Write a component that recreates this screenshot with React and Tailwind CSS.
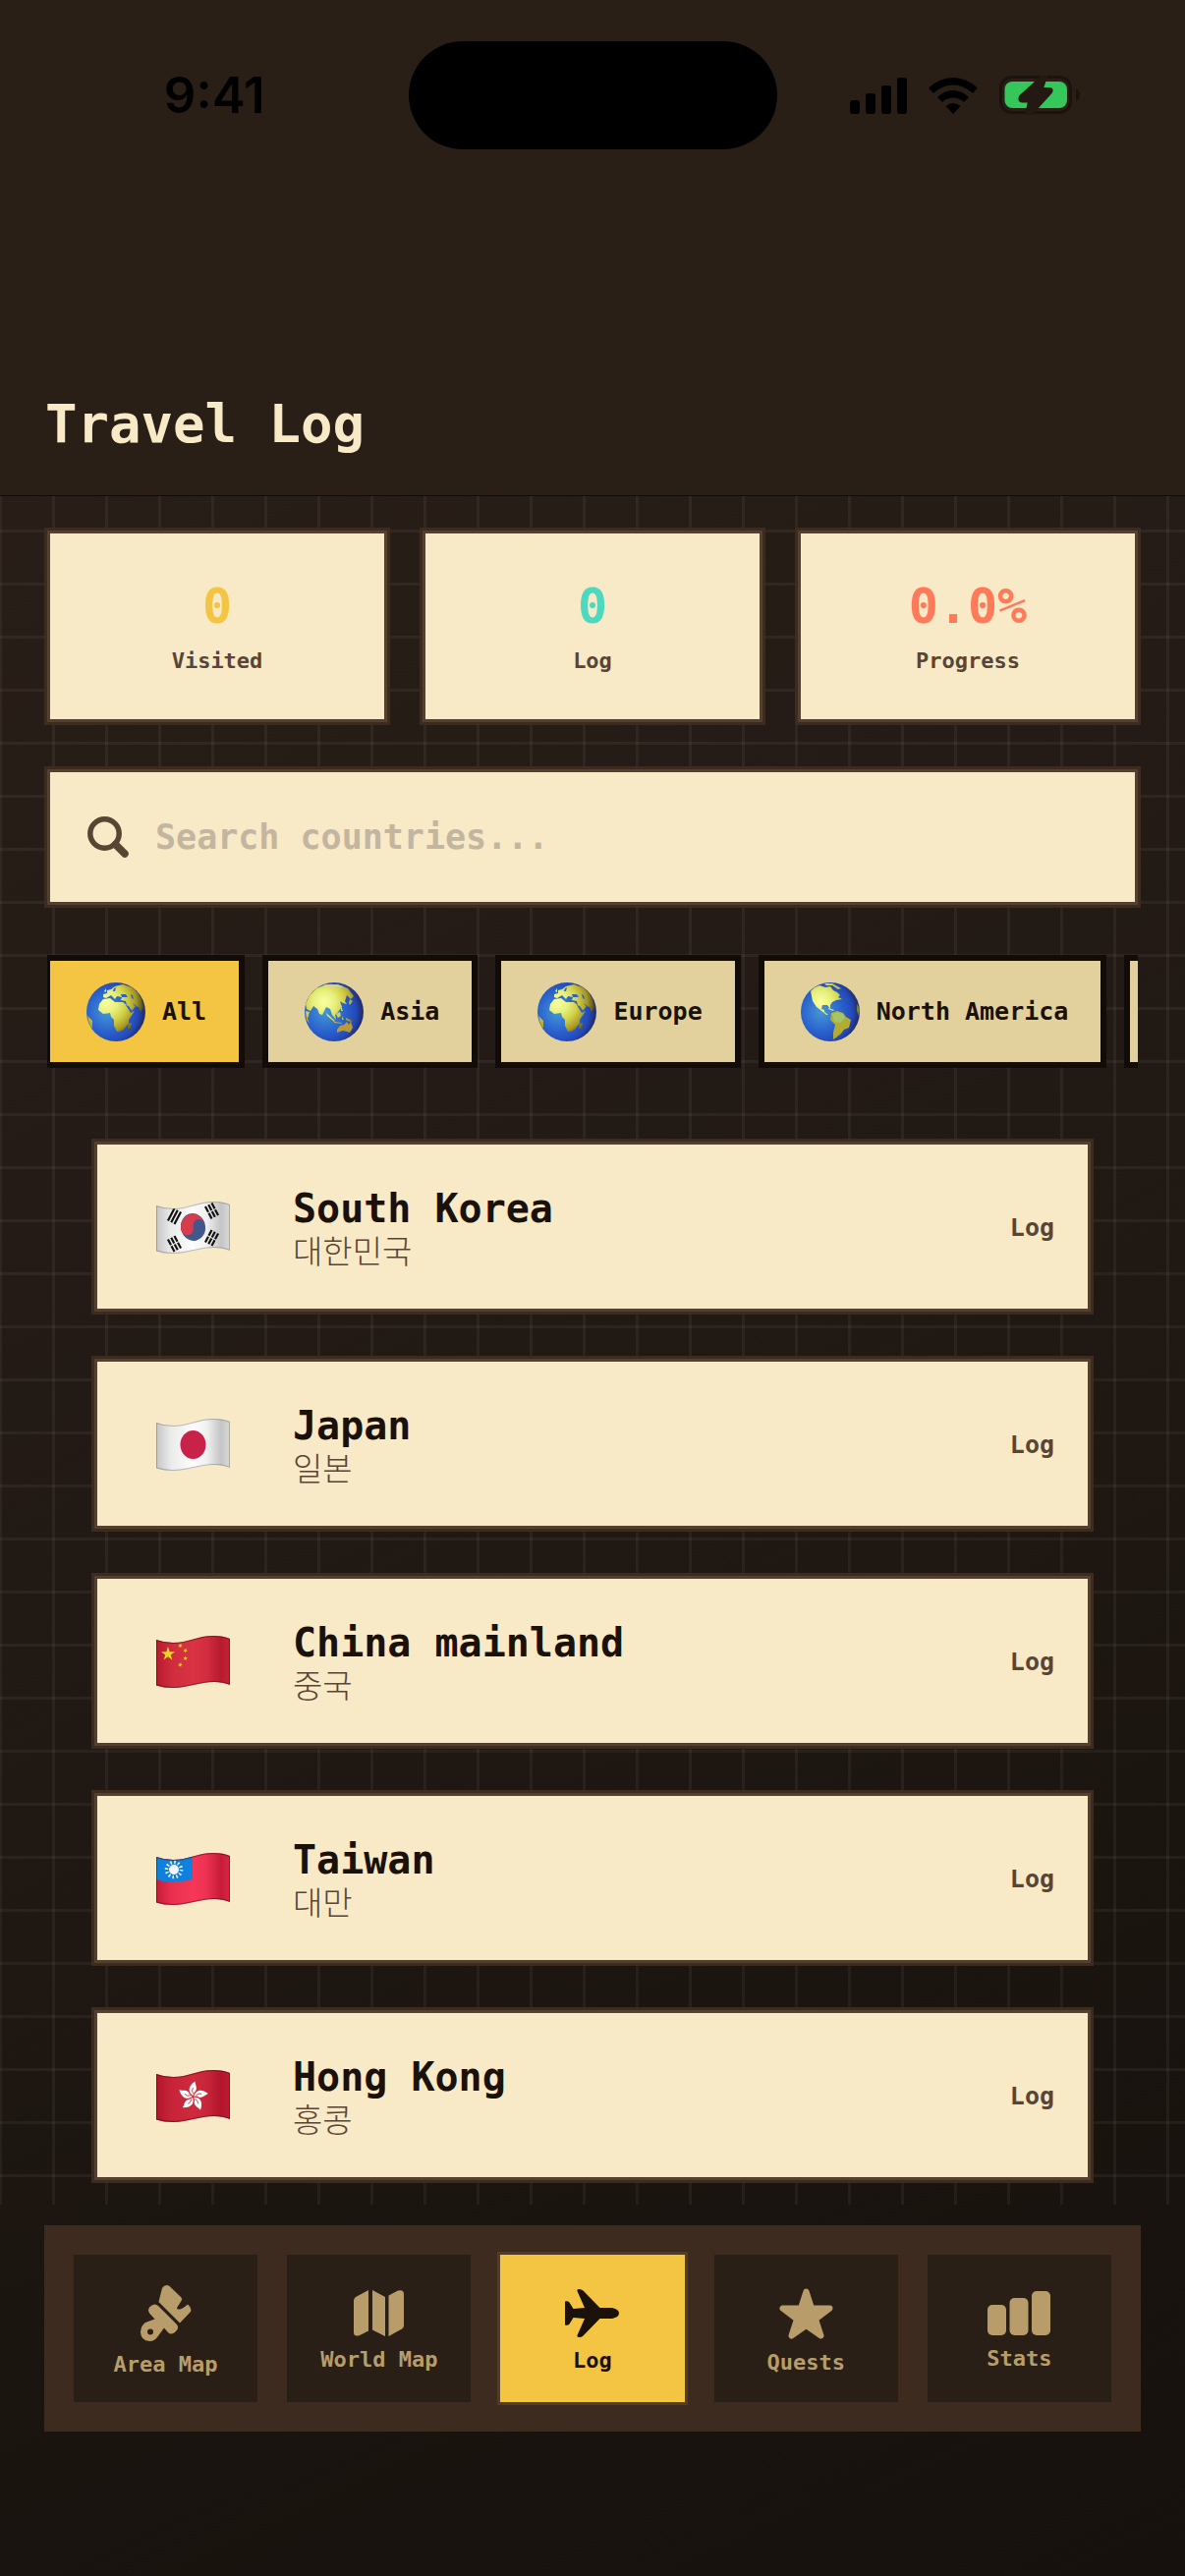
import { useState } from 'react'

const stats = [
    { label: 'Visited', value: '0', color: 'text-[#f4c542]' },
    { label: 'Log', value: '0', color: 'text-[#4fd8c0]' },
    { label: 'Progress', value: '0.0%', color: 'text-[#ff7a59]' },
]

const regions = [
    { name: 'All', globe: 'africa' },
    { name: 'Asia', globe: 'asia' },
    { name: 'Europe', globe: 'africa' },
    { name: 'North America', globe: 'americas' },
]

const countries = [
    { code: 'kr', name: 'South Korea', local: '대한민국' },
    { code: 'jp', name: 'Japan', local: '일본' },
    { code: 'cn', name: 'China mainland', local: '중국' },
    { code: 'tw', name: 'Taiwan', local: '대만' },
    { code: 'hk', name: 'Hong Kong', local: '홍콩' },
]

const tabs = [
    { name: 'Area Map', Icon: BrushIcon },
    { name: 'World Map', Icon: MapIcon },
    { name: 'Log', Icon: PlaneIcon },
    { name: 'Quests', Icon: StarIcon },
    { name: 'Stats', Icon: BarsIcon },
]

/* ---------- Status bar ---------- */

function StatusBar() {
    return (
        <div className="grid grid-cols-[1fr_375px_1fr] items-center pt-[42px]">
            <div className="pl-[21px] text-center font-['Inter',sans-serif] text-[51px] leading-[60px] font-semibold text-black">
                9:41
            </div>
            <div className="h-[110px] rounded-full bg-black" />
            <div className="flex items-center justify-center gap-[22px] pr-[32px]">
                <svg width="58" height="37" viewBox="0 0 58 37">
                    <rect x="0" y="23" width="10" height="14" rx="3" />
                    <rect x="16" y="16" width="10" height="21" rx="3" />
                    <rect x="32" y="8" width="10" height="29" rx="3" />
                    <rect x="48" y="0" width="10" height="37" rx="3" />
                </svg>
                <svg width="50" height="37" viewBox="0 0 50 37">
                    <path d="M0 10.5Q11 0 25 0T50 10.5L45 16Q36 7.500 25 7.500T5 16Z" />
                    <path d="M9 20Q16 13 25 13T41 20L36 25Q31 20.500 25 20.500T14 25Z" />
                    <path d="M17.500 29Q21 26 25 26T32.500 29L25 37Z" />
                </svg>
                <svg width="82" height="40" viewBox="0 0 82 40">
                    <rect x="1.500" y="1.500" width="71" height="36" rx="11" fill="none" stroke="#1b130e" strokeWidth="3" />
                    <path d="M78 13Q82 15 82 19.500T78 26Z" fill="#1b130e" />
                    <rect x="5.500" y="6" width="63.500" height="27" rx="8" fill="#35c759" />
                    <path
                        d="M43 1L21 21Q19 26 23 26.500H30L27 39H33L53 17Q55 13.500 51 13H44L48 1Z"
                        fill="#241912"
                        stroke="#241912"
                        strokeWidth="2"
                        strokeLinejoin="round"
                    />
                </svg>
            </div>
        </div>
    )
}

/* ---------- Globes ---------- */

function GlobeLand({ kind }) {
    if (kind === 'asia') {
        return (
            <>
                <path d="M1 22L5 13 12 6 22 2 34 2 44 6 50 14 47 17 43 13 41 19 43 22 39 21 36 19 38 25 34 30 31 33 32 38 28 33 26 27 22 25 18 33 15 32 13 27 9 24 6 29 2 27Z" />
                <path d="M1 29L5 30 3 37 5 42 2 38Z" />
                <path d="M22 31L31 39 30 40 23 34ZM32 32L36 30 37 34 34 36ZM37 24L39 29 37 29ZM30 40L38 41 38 42 30 41ZM38 34L40 38 38 38ZM42 36L49 39 47 41 42 38Z" />
                <path d="M33 48L36 44 40 43 43 40 45 43 47 40 49 46 46 51 43 50 39 49 33 51Z" fill="#b99a35" />
                <path d="M46 17L49 19 46 23 45 21Z" />
                <path d="M18 3Q28 0 40 4 30 7 18 3" fill="#d8cfb6" opacity=".7" />
            </>
        )
    }
    if (kind === 'americas') {
        return (
            <>
                <path d="M10 9L14 5 19 3 25 5 30 4 33 8 37 10 40 13 38 15 42 17 36 18 32 20 30 23 30 27 27 23 22 23 21 27 24 28 24 30 28 33 26 33 20 28 16 25 12 19 11 14Z" />
                <path d="M24 1L32 1 41 6 38 7 32 3 26 3Z" />
                <path d="M28 26L34 28 33 29 28 27Z" />
                <path d="M31 31L37 29 43 31 46 35 51 38 49 46 44 48 41 52 36 56 33 58 33 51 35 43 30 38Z" fill="#b3ab33" />
                <path d="M32 32L37 30 43 32 45 36 40 41 34 40Z" fill="#a5c56b" />
                <path d="M57 22L60 27 59 34 57 29Z" fill="#7d8425" />
            </>
        )
    }
    return (
        <>
            <path d="M17 17L24 16 29 20 37 20 42 24 46 30 49 29 43 38 43 42 40 45 38 48 34 50 31 50 28 44 28 38 25 35 24 31 17 32 12 28 13 22Z" />
            <path d="M17 15L17 12 21 11 21 8 25 7 29 4 37 2 46 5 52 10 56 17 58 25 55 30 53 25 50 24 47 28 44 29 41 23 40 19 35 18 36 15 31 14 29 17 25 13 20 16Z" />
            <path d="M43 42L46 41 45 47 42 47Z" />
            <path d="M18 9L20 6 20 10Z" />
            <path d="M1 34L6 39 6 47 3 43Z" />
            <path d="M35 12L40 12 42 15 36 15ZM45 12L47 13 48 17 46 16ZM28 6L30 5 29 9 27 9Z" fill="#2f62bf" />
            <path d="M40 23L45 31 47 30 43 24ZM47 21L51 24 50 25Z" fill="#2f62bf" />
        </>
    )
}

function Globe({ kind, id }) {
    return (
        <svg width="69" height="60" viewBox="-4 0 69 60" className="shrink-0">
            <defs>
                <radialGradient id={`sea-${id}`} cx=".35" cy=".5" r=".62">
                    <stop offset="0" stopColor="#4597d6" />
                    <stop offset=".55" stopColor="#2a62cd" />
                    <stop offset=".85" stopColor="#2348ba" />
                    <stop offset="1" stopColor="#21306f" />
                </radialGradient>
                <radialGradient id={`land-${id}`} gradientUnits="userSpaceOnUse" cx="20" cy="20" r="38">
                    <stop offset="0" stopColor="#fbffa0" />
                    <stop offset=".3" stopColor="#e6f07c" />
                    <stop offset=".55" stopColor="#d2cf45" />
                    <stop offset=".8" stopColor="#a59727" />
                    <stop offset="1" stopColor="#544d10" />
                </radialGradient>
                <clipPath id={`disc-${id}`}>
                    <circle cx="30" cy="30" r="30" />
                </clipPath>
            </defs>
            <circle cx="30" cy="30" r="30" fill={`url(#sea-${id})`} />
            <g clipPath={`url(#disc-${id})`} fill={`url(#land-${id})`} strokeLinejoin="round">
                <GlobeLand kind={kind} />
            </g>
        </svg>
    )
}

/* ---------- Flags ---------- */

const STAR = 'M0 -1L.225 -.309 .951 -.309 .363 .118 .588 .809 0 .382 -.588 .809 -.363 .118 -.951 -.309 -.225 -.309Z'

function Trigram({ x, y, angle, split }) {
    return (
        <g transform={`translate(${x} ${y}) rotate(${angle})`} stroke="#111" strokeWidth="2.200">
            <path d="M-3.700 -7V7M0 -7V7M3.700 -7V7" strokeDasharray={split ? '6.500 1' : undefined} />
        </g>
    )
}

function FlagArt({ code }) {
    switch (code) {
        case 'kr':
            return (
                <>
                    <g transform="rotate(-12 37.5 26)">
                        <ellipse cx="37.500" cy="26" rx="12.500" ry="14" fill="#43578f" />
                        <path d="M25 27A12.500 14 0 0 1 50 26A6 6.500 0 0 0 37.500 26A6.200 6.500 0 0 1 25 27Z" fill="#d63c4c" />
                    </g>
                    <Trigram x={18.5} y={15} angle={28} />
                    <Trigram x={56.5} y={9.5} angle={-28} split />
                    <Trigram x={18.5} y={43} angle={-28} split />
                    <Trigram x={56.5} y={37} angle={28} split />
                </>
            )
        case 'jp':
            return <ellipse cx="37.500" cy="26.500" rx="13" ry="14.500" fill="#c8214a" />
        case 'cn':
            return (
                <g fill="#e8da1c">
                    <path d={STAR} transform="translate(12 18.5) scale(7.500)" />
                    <path d={STAR} transform="translate(24.5 10) rotate(20) scale(2.600)" />
                    <path d={STAR} transform="translate(29.7 15) rotate(40) scale(2.600)" />
                    <path d={STAR} transform="translate(29.7 23) scale(2.600)" />
                    <path d={STAR} transform="translate(24.5 29.5) rotate(20) scale(2.600)" />
                </g>
            )
        case 'tw':
            return (
                <>
                    <path d="M0 0H37V27Q28 29 18 29.500Q8 30 0 27Z" fill="#1080dd" />
                    <circle cx="18" cy="17" r="5" fill="#f4f6f8" />
                    <circle cx="18" cy="17" r="7.500" fill="none" stroke="#f4f6f8" strokeWidth="3.500" strokeDasharray="1.500 2.427" />
                </>
            )
        default:
            return [0, 72, 144, 216, 288].map((a) => (
                <g key={a} transform={`translate(37.5 27) rotate(${a})`}>
                    <path d="M0 -1C-5 -4 -6 -10 2 -15.500C2 -12 5.500 -8 1.500 -4.500Q0 -3 0 -1Z" fill="#fff" />
                    <path d="M0 -3Q-2 -6 0 -9" fill="none" stroke="#cf2238" strokeWidth=".8" />
                </g>
            ))
    }
}

const flagBase = {
    kr: '#fcfcfc',
    jp: '#fcfcfc',
    cn: '#d93343',
    tw: '#f73757',
    hk: '#cf2a3e',
}

function Flag({ code }) {
    const light = code === 'kr' || code === 'jp'
    const shade = light ? '#8d8d8d' : '#96001a'
    const shape = 'M0 4Q8 7 17 7C33 7 42 0 58 0Q68 0 75 3V50Q68 47 59 47C43 47 33 53 17 53Q8 53 0 50.500Z'
    return (
        <svg width="75" height="54" viewBox="0 0 75 54" className="shrink-0">
            <defs>
                <clipPath id={`wave-${code}`}>
                    <path d={shape} />
                </clipPath>
                <linearGradient id={`fold-${code}`}>
                    <stop offset="0" stopColor={shade} stopOpacity=".5" />
                    <stop offset=".2" stopColor={shade} stopOpacity=".15" />
                    <stop offset=".5" stopColor={shade} stopOpacity="0" />
                    <stop offset=".68" stopColor={shade} stopOpacity=".1" />
                    <stop offset=".88" stopColor={shade} stopOpacity=".5" />
                    <stop offset="1" stopColor={shade} stopOpacity=".3" />
                </linearGradient>
            </defs>
            <g clipPath={`url(#wave-${code})`}>
                <rect width="75" height="54" fill={flagBase[code]} />
                <rect width="75" height="54" fill={`url(#fold-${code})`} />
                <FlagArt code={code} />
                <path d={shape} fill="none" stroke={light ? '#777' : '#4a0010'} strokeOpacity=".5" strokeWidth="2" />
            </g>
        </svg>
    )
}

/* ---------- Icons ---------- */

function SearchIcon() {
    return (
        <svg width="42" height="42" viewBox="0 0 42 42" fill="none" stroke="#584534" strokeLinecap="round" className="shrink-0">
            <circle cx="17.500" cy="17.500" r="14.700" strokeWidth="5.500" />
            <path d="M28.500 28.500L38 38" strokeWidth="7.500" />
        </svg>
    )
}

function BrushIcon() {
    return (
        <svg width="52" height="57" viewBox="0 0 52 57" fill="currentColor">
            <path d="M22 3Q25 -1.500 29.500 1L41 12Q43 14 41.500 16L37 23Q37 25 40 24.500Q43 24 48 19.500Q52.500 23 51 27L40 38.500 18.500 17Z" />
            <path
                fillRule="evenodd"
                d="M9.500 22Q14 17.500 18 21L36.500 39.500Q40 43 36 47Q31.500 51.500 28 48L24 43.500 17 53Q14 57 9.500 57Q0 56.500 0 47.500Q.5 41 5 38L14.500 34.500 9.500 29Q6.500 25.500 9.500 22ZM10 44.500A3 3 0 1 0 10 50.500A3 3 0 1 0 10 44.500Z"
            />
        </svg>
    )
}

function MapIcon() {
    return (
        <svg width="51" height="47" viewBox="0 0 51 47" fill="currentColor">
            <path d="M0 11Q0 8 3 6.500L15 0V41.500L6 46Q0 48 0 43Z" />
            <path d="M19 0L32 7V47L19 40.500Z" />
            <path d="M35.500 5.500L45 .5Q51 -1 51 4V36Q51 38 49 39.500L35.500 47Z" />
        </svg>
    )
}

function PlaneIcon() {
    return (
        <svg width="55" height="49" viewBox="0 0 55 49" fill="currentColor">
            <path d="M0 12.500Q3 11.500 4.500 13.500L8.500 20 20 19 12.500 2Q12 0 14 0Q17 0 18.500 1.500L35.500 19H48Q55 20.500 55 24.500T48 30H35.500L18.500 47.500Q17 49 14 49Q12 49 12.500 47L20 30 8.500 29 4.500 35.500Q3 37.500 0 36.500Z" />
        </svg>
    )
}

function StarIcon() {
    return (
        <svg width="55" height="52" viewBox="0 0 55 52" fill="currentColor" stroke="currentColor" strokeWidth="6" strokeLinejoin="round">
            <path d="M27.500 3.500L33 20.500H51.500L37 31.500 42.500 48.500 27.500 38 12.500 48.500 18 31.500 3.500 20.500H22Z" />
        </svg>
    )
}

function BarsIcon() {
    return (
        <svg width="64" height="45" viewBox="0 0 64 45" fill="currentColor">
            <rect x="0" y="14" width="19" height="31" rx="5" />
            <rect x="22.500" y="7" width="19" height="38" rx="5" />
            <rect x="45" y="0" width="19" height="45" rx="5" />
        </svg>
    )
}

/* ---------- Page ---------- */

export default function App() {
    const [search, setSearch] = useState('')
    const [region, setRegion] = useState('All')
    const [tab, setTab] = useState('Log')

    const visible = countries.filter((c) => c.name.toLowerCase().includes(search.toLowerCase()))

    return (
        <div className="flex min-h-screen flex-col bg-[linear-gradient(155deg,#2b2018,#241b16_40%,#1b1510_75%,#16110d)] font-['DejaVu_Sans_Mono','Noto_Sans_CJK_KR',monospace] font-bold text-[#1a110b]">
            <header className="flex h-[505px] flex-col justify-between border-b border-[#120c08] bg-[#2a1f17]">
                <StatusBar />
                <h1 className="px-[46px] pb-10 text-[54px] leading-[64px] text-[#f8e9c7]">Travel Log</h1>
            </header>

            <main className="flex-1 bg-[linear-gradient(#fff0dc0d_3px,transparent_3px),linear-gradient(90deg,#fff0dc0d_3px,transparent_3px)] bg-[size:54px_54px] bg-[position:-1px_34px] px-12 pt-[35px] pb-[25px]">
                {/* Stats */}
                <div className="grid grid-cols-3 gap-9">
                    {stats.map((s) => (
                        <div key={s.label} className="border-3 border-[#544030] bg-[#f8e9c7] pt-11 pb-[45px] text-center shadow-[0_0_0_3px_#3d2b1f]">
                            <div className={`text-[50px] leading-[60px] ${s.color}`}>{s.value}</div>
                            <div className="mt-3 text-[22px] leading-[28px] text-[#584534]">{s.label}</div>
                        </div>
                    ))}
                </div>

                {/* Search */}
                <label className="mt-12 flex h-[138px] items-center gap-[27px] border-3 border-[#544030] bg-[#f8e9c7] px-[38px] shadow-[0_0_0_3px_#3d2b1f]">
                    <SearchIcon />
                    <input
                        type="text"
                        aria-label="Search countries"
                        placeholder="Search countries..."
                        value={search}
                        onChange={(e) => setSearch(e.target.value)}
                        className="min-w-0 flex-1 bg-transparent text-[35px] leading-[48px] placeholder-[#c2b6a0] outline-none"
                    />
                </label>

                {/* Region filter */}
                <div className="mt-[51px] flex gap-[18px] overflow-hidden">
                    {regions.map((r) => (
                        <button
                            key={r.name}
                            onClick={() => setRegion(r.name)}
                            className={`flex h-[115px] shrink-0 items-center gap-3 border-6 border-[#120c08] px-[33px] text-[25px] leading-[32px] first:-ml-[3px] ${
                                region === r.name ? 'bg-[#f4c542]' : 'bg-[#e3d19d]'
                            }`}
                        >
                            <Globe kind={r.globe} id={r.name.replace(' ', '')} />
                            {r.name}
                        </button>
                    ))}
                    <button aria-label="More regions" className="h-[115px] flex-1 border-6 border-r-0 border-[#120c08] bg-[#e3d19d]" />
                </div>

                {/* Countries */}
                <ul className="mt-[75px] space-y-12 px-12">
                    {visible.map((c) => (
                        <li
                            key={c.code}
                            className="flex items-center border-3 border-[#544030] bg-[#f8e9c7] pt-[43px] pr-[34px] pb-10 pl-[60px] shadow-[0_0_0_3px_#3d2b1f]"
                        >
                            <Flag code={c.code} />
                            <div className="ml-16 flex-1">
                                <h2 className="text-[40px] leading-[44px]">{c.name}</h2>
                                <p lang="ko" className="font-['Noto_Sans_CJK_KR',sans-serif] text-[33px] leading-[40px] font-light text-[#584534]">
                                    {c.local}
                                </p>
                            </div>
                            <button className="text-[25px] leading-[32px] text-[#584534]">Log</button>
                        </li>
                    ))}
                </ul>
            </main>

            <footer className="px-[45px] pt-[21px] pb-[147px]">
                <nav className="grid grid-cols-5 gap-[30px] bg-[#3d2b1f] p-[30px]">
                    {tabs.map(({ name, Icon }) => (
                        <button
                            key={name}
                            onClick={() => setTab(name)}
                            className={`flex h-[150px] flex-col items-center justify-center gap-3 pt-[5px] text-[22px] leading-[24px] whitespace-nowrap ${
                                tab === name ? 'bg-[#f4c542] text-[#1a110b] shadow-[0_0_0_3px_#523d22]' : 'bg-[#2a1f17] text-[#b89d6a]'
                            }`}
                        >
                            <Icon />
                            {name}
                        </button>
                    ))}
                </nav>
            </footer>
        </div>
    )
}
